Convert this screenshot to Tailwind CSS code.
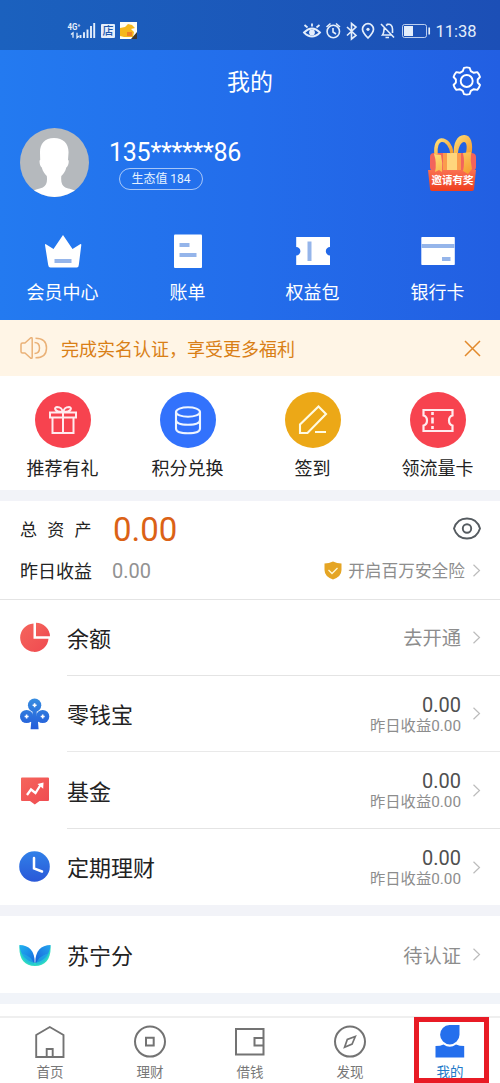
<!DOCTYPE html>
<html lang="zh-CN">
<head>
<meta charset="utf-8">
<title>我的</title>
<script src="https://cdn.jsdelivr.net/npm/@tailwindcss/browser@4"></script>
</head>
<body class="w-[500px] h-[1083px] overflow-hidden bg-white font-['Roboto','Noto_Sans_CJK_SC',sans-serif] text-[#222]">
<div class="flex flex-col w-[500px] h-[1083px] whitespace-nowrap">

  <!-- Status bar -->
  <div class="h-[50px] shrink-0 bg-linear-to-r from-[#1b61be] to-[#1c4fb6] text-[#e8f1ff]">
    <svg class="block" width="500" height="50" viewBox="0 0 500 50" fill="none" stroke="#e4eefb" stroke-width="1.4">
      <text x="67.500" y="29.500" font-size="8.500" font-weight="700" fill="#e4eefb" stroke="none" textLength="13" lengthAdjust="spacingAndGlyphs">4G⁺</text>
      <path d="M71 34.500l2-1.700v5M77 32.800v5l2-1.700" stroke-width="1.300"/>
      <path d="M80.500 35v3M84 32.300V38M87.500 29.500V38M91 26V38M94.200 23V38" stroke-width="1.900"/>
      <rect x="101" y="24" width="14" height="14" rx="1" fill="#e4eefb" stroke="none"/>
      <text x="102.500" y="35" font-size="11" font-weight="500" fill="#1d57ad" stroke="none">店</text>
      <rect x="120" y="22" width="17" height="17" fill="#fdfdf5" stroke="none"/>
      <path d="M120 28l5-1 3-3 4 1 3 3-4 1 3 3-1 5h-9l-4-1z" fill="#f5b81c" stroke="none"/>
      <path d="M127 32h5v4h-5z" fill="#ee8125" stroke="none"/>
      <path d="M137 32v7h-6z" fill="#3d3932" stroke="none"/>
      <path d="M304 32.500q8-8 16 0q-8 8-16 0zM312 26.500v-3M307.500 27.500l-3-2.500M316.500 27.500l3-2.500" stroke-width="1.800"/>
      <circle cx="312" cy="32.500" r="2.900" fill="#e4eefb" stroke="none"/>
      <circle cx="333.300" cy="31.500" r="6.200" stroke-width="1.600"/><path d="M333 28v4l3 2M326.500 27l4-3.500M340 27l-4-3.500" stroke-width="1.600"/>
      <path d="M347 27l9 8.500-4.500 3.500V23.500l4.500 3.500-9 8.500" stroke-width="1.600"/>
      <path d="M368 38c-3.500-3.500-5.500-5.500-5.500-8.800a5.500 5.500 0 0 1 11 0c0 3.300-2 5.300-5.500 8.800z" stroke-width="1.700"/><circle cx="368" cy="29.300" r="1.600" fill="#e4eefb" stroke="none"/>
      <path d="M381 24l13 13.500M384.500 27.500c-1 2 0 5-2 7.500h9M386 25.500c4-3 6.500 0 6.500 3.500v4M387.500 23.500v1M385.500 37.500h3.500" stroke-width="1.600"/>
      <rect x="402.500" y="24.500" width="24" height="13" rx="2" stroke-width="1" stroke-opacity=".8"/>
      <rect x="404" y="26" width="9" height="10" fill="#e4eefb" stroke="none"/><path d="M429.200 27.500v7" stroke-width="1.700"/>
      <text x="435.500" y="37" font-size="16.500" fill="#e4eefb" stroke="none">11:38</text>
    </svg>
  </div>

  <!-- Profile header -->
  <header class="h-[270px] shrink-0 bg-linear-to-r from-[#237af0] via-[#236deb] via-50% to-[#225fe2] text-white flex flex-col">
    <div class="h-[62px] grid grid-cols-[1fr_auto_1fr] items-center px-[19px]">
      <span></span>
      <h1 class="text-[23px] leading-[30px] pt-[4px]">我的</h1>
      <svg class="justify-self-end" width="29" height="30" viewBox="452 66 29 30" fill="none" stroke="#fff" stroke-width="1.900" stroke-linejoin="round">
        <path d="M464 67.800q2.800-.8 5.600 0l1.200 3.300 3 1.700 3.500-.7q2 2.200 2.700 4.900l-2.300 2.500v3l2.300 2.500q-.8 2.800-2.700 4.900l-3.500-.7-3 1.700-1.200 3.300q-2.800.8-5.600 0l-1.200-3.300-3-1.700-3.500.7q-2-2.200-2.700-4.900l2.300-2.500v-3l-2.300-2.500q.8-2.800 2.700-4.900l3.500.7 3-1.700z"/>
        <circle cx="466.700" cy="81" r="6"/>
      </svg>
    </div>
    <div class="h-[108px] flex items-start pl-5 pr-[20px] pt-[15px]">
      <svg class="mt-px" width="69" height="70" viewBox="0 0 69 70">
        <defs><clipPath id="avatar"><circle cx="34.500" cy="34.500" r="34.500"/></clipPath></defs>
        <g clip-path="url(#avatar)"><path d="M0 0h69v70H0z" fill="#b5b9bd"/>
        <path d="M34 10c-9.500 0-14.300 6-14 15l.2 7c-1.300 0-.6 6 1.600 7.500 1 4 2.700 6 5 8.500.7 6-.3 9.500-4 11.500-4 1.500-8 1.800-11 4.500v7h45v-7c-3-2.700-8-3-11.500-4.500-3.500-2-4.500-5.500-4-11.500 2.500-2.500 4-4.500 5-8.500 2.300-1.500 3.200-7.500 1.700-7.500l.5-7c.5-9-5-15-14.500-15z" fill="#fff"/></g>
      </svg>
      <div class="ml-[20px] mt-[11px] flex-1">
        <div class="text-[25px] leading-[30px] tracking-[-0.25px]">135******86</div>
        <div class="ml-[10px] w-[84px] h-[22px] rounded-full border border-white/60 text-[12px] leading-[21px] text-center text-[#e6f2ff]">生态值 184</div>
      </div>
      <svg class="mt-[7px]" width="52" height="58" viewBox="428 134 52 58">
        <defs>
          <linearGradient id="ribbon" x1="0" y1="0" x2="1" y2="1"><stop stop-color="#ffdf7a"/><stop offset="1" stop-color="#f59b2c"/></linearGradient>
          <linearGradient id="box" x1="0" y1="0" x2="0" y2="1"><stop stop-color="#fa7050"/><stop offset="1" stop-color="#ee3e1e"/></linearGradient>
        </defs>
        <path d="M430 157q0-4 4-4h37q5 0 5 4v10q0 4-5 4h-37q-4 0-4-4z" fill="#f2645c"/>
        <path d="M443 153h18v17h-18z" fill="#fb9c4c"/><path d="M447 153h10v17h-10z" fill="#ffd67d"/>
        <path d="M454 153c-1-9 3-18 10-18 7-.5 9.500 9 7.500 19l-5.500-1c1.500-7 .5-11-2-11-3 0-5.500 5-6 11z" fill="url(#ribbon)"/>
        <path d="M452 153c-1-7-5-13-10.500-13-5 1-6 7-5.500 14" fill="none" stroke="url(#ribbon)" stroke-width="3.500"/>
        <path d="M428 170h48l-2 19q0 2-3 2h-38q-3 0-3-2z" fill="url(#box)"/>
        <path d="M434 154l7 1q2 8 1 17l-3-2-4 2q2-9-1-18zM463 153l8-1q-1 9 1 17l-4 5-5-3q2-9 0-18z" fill="url(#ribbon)"/>
        <text x="431.500" y="184" font-size="10.500" font-weight="700" fill="#fff">邀请有奖</text>
      </svg>
    </div>
    <div class="grid grid-cols-4 text-[18px] leading-[28px] text-center">
      <div><svg class="mx-auto h-[59px]" width="60" viewBox="32.500 220 60 59"><path d="M45 244l8 5 9.500-14 9.500 14 8-5q1 0 .8 1l-2.500 20q-.2 2.500-2 2.500H50q-2 0-2.300-2.500L44.500 245q0-1 .5-1z" fill="#fff"/><path d="M54 259h17v4H54z" fill="#95b5ea"/></svg>会员中心</div>
      <div><svg class="mx-auto h-[59px]" width="60" viewBox="157.500 220 60 59"><rect x="173.500" y="234.500" width="28" height="33.500" rx="1" fill="#fff"/><path d="M179 243h10v4h-10zM179 253h17v4h-17z" fill="#95b5ea"/></svg>账单</div>
      <div><svg class="mx-auto h-[59px]" width="60" viewBox="282.500 220 60 59"><path d="M296 237h33q.5 0 .5.500V247a4.200 4.200 0 0 0 0 8.400v9.600h-33.800v-9.600a4.200 4.200 0 0 0 0-8.400V237z" fill="#fff"/><path d="M307 241.500h4V261h-4z" fill="#95b5ea"/></svg>权益包</div>
      <div><svg class="mx-auto h-[59px]" width="60" viewBox="407.500 220 60 59"><rect x="420.800" y="237" width="33.500" height="28" rx=".8" fill="#fff"/><path d="M421 244h33v4h-33zM441.500 257h8.500v4h-8.500z" fill="#95b5ea"/></svg>银行卡</div>
    </div>
  </header>

  <!-- Verification notice -->
  <div class="h-[56px] shrink-0 bg-[#fff5e6] text-[#d97f16] flex items-center pl-5 pr-[19px] text-[18px] pt-px">
    <svg class="-mt-[2px]" width="28" height="22" viewBox="0 0 28 22" fill="none" stroke="#eab177" stroke-width="1.500" stroke-linejoin="round"><path d="M1 7.500q0-1.500 1.500-1.500H5l5.500-5q1.700-1 1.700 1v18q0 2-1.700 1L5 16H2.500Q1 16 1 14.500zM14.500 5.500q5 0 5 5.500t-5 5.500M15.500 1.200q11 0 11 9.800t-11 9.800"/></svg>
    <span class="ml-[13px] flex-1 pt-px">完成实名认证，享受更多福利</span>
    <svg class="-mt-px" width="17" height="17" viewBox="0 0 17 17" stroke="#e28a2c" stroke-width="1.500"><path d="M1 1l15 15M16 1L1 16"/></svg>
  </div>

  <!-- Shortcuts -->
  <div class="h-[114px] shrink-0 grid grid-cols-4 pt-[16px] text-[18px] leading-[28px] text-center">
    <div><svg class="mx-auto mb-[7px]" width="56" height="56" viewBox="0 0 56 56" fill="none" stroke="#ffebee" stroke-width="2"><circle cx="28" cy="28" r="28" fill="#f7434f" stroke="none"/><path d="M15 20.500h26v5H15zM17.500 25.500h21V41h-21zM28 20.500V41M27.500 20c-8 0-9-4.500-5.500-5 3.500 0 5.500 2.500 5.500 5zM28.500 20c8 0 9-4.500 5.500-5-3.500 0-5.500 2.500-5.500 5z"/></svg>推荐有礼</div>
    <div><svg class="mx-auto mb-[7px]" width="56" height="56" viewBox="0 0 56 56" fill="none" stroke="#eef5ff" stroke-width="2.100"><circle cx="28" cy="28" r="28" fill="#3272fc" stroke="none"/><ellipse cx="28" cy="20" rx="12" ry="4.800"/><path d="M16 20v16.500c0 3 5 4.800 12 4.800s12-1.800 12-4.800V20M16 28c0 3 5 4.700 12 4.700S40 31 40 28"/></svg>积分兑换</div>
    <div><svg class="mx-auto mb-[7px]" width="56" height="56" viewBox="0 0 56 56" fill="none" stroke="#fffbe3" stroke-width="2.100"><circle cx="28" cy="28" r="28" fill="#eca817" stroke="none"/><path d="M15 41V32.500L33.500 14.500 41 22 22.500 41zM30 40h11"/></svg>签到</div>
    <div><svg class="mx-auto mb-[7px]" width="56" height="56" viewBox="0 0 56 56" fill="none" stroke="#ffebee" stroke-width="2.200"><circle cx="28" cy="28" r="28" fill="#f7434f" stroke="none"/><path d="M13.500 18h29v5.500q-3.500 1-3.500 5t3.500 5V39h-29v-5.500q3.500-1 3.500-5t-3.500-5z"/><path d="M22.500 20v3M22.500 25.500v6M22.500 34v3" stroke-width="2.600"/></svg>领流量卡</div>
  </div>
  <div class="h-[11px] shrink-0 bg-[#f2f3f8]"></div>

  <!-- Total assets -->
  <section class="h-[99px] shrink-0 border-b border-[#e4e4e4] pl-5 pr-[19px]">
    <div class="h-[54px] flex items-center pt-[2px]">
      <span class="text-[17px] tracking-[10.300px] pt-[3px]">总资产</span>
      <span class="ml-[11px] text-[33px] leading-[40px] text-[#db6216] flex-1 pt-[2px]">0.00</span>
      <svg width="28" height="24" viewBox="0 0 28 24" fill="none" stroke="#555b60" stroke-width="1.900"><path d="M1 11.500C3 5 8 1.500 14 1.500S25 5 27 11.500C25 18 20 21.500 14 21.500S3 18 1 11.500z"/><circle cx="14" cy="11.500" r="4.200"/></svg>
    </div>
    <div class="h-[32px] flex items-center">
      <span class="text-[18px]">昨日收益</span>
      <span class="ml-5 text-[20px] text-[#929292] flex-1">0.00</span>
      <svg class="-mt-[2px]" width="18" height="19" viewBox="0 0 18 19"><path d="M9 .5q4 2 8.500 2V9q0 6.500-8.500 9.500Q.500 15.500.500 9V2.500q4.500 0 8.500-2z" fill="#e5a524"/><path d="M4.500 9l3.500 3.500 5.500-5.500" fill="none" stroke="#fff8d8" stroke-width="1.300"/></svg>
      <span class="ml-[6px] text-[16.700px] text-[#8d8d8d] pt-[2px]">开启百万安全险</span>
      <svg class="ml-[7px] -mt-[2px]" width="9" height="13" viewBox="0 0 9 13" fill="none" stroke="#bcbcbc" stroke-width="1.200"><path d="M1.500.7L7.500 6.500l-6 5.800"/></svg>
    </div>
  </section>

  <!-- Accounts -->
  <section class="shrink-0 text-[22px]">
    <div class="h-[76px] flex pl-5">
      <svg class="mt-[22px]" width="30" height="31" viewBox="20 622 30 31"><defs><linearGradient id="red" x1="0" y1="0" x2="1" y2="1"><stop stop-color="#f5655c"/><stop offset="1" stop-color="#ef4a50"/></linearGradient></defs><path d="M33.500 623.500v15.300h15a14.200 14.200 0 1 1-15-15.300z" fill="url(#red)"/><path d="M36 622.700a14 14 0 0 1 14 13.600H36z" fill="url(#red)"/></svg>
      <div class="ml-[17px] flex-1 border-b border-[#e4e4e4] flex items-center pr-[19px]"><span class="flex-1 pt-[4px]">余额</span><span class="text-[19.300px] text-[#8d8d8d] pt-[4px]">去开通</span><svg class="ml-[11px]" width="9" height="13" viewBox="0 0 9 13" fill="none" stroke="#bcbcbc" stroke-width="1.200"><path d="M1.500.7L7.500 6.500l-6 5.800"/></svg></div>
    </div>
    <div class="h-[76px] flex pl-5">
      <svg class="mt-[22px]" width="30" height="32" viewBox="20 698 30 32" fill="url(#blue)"><defs><linearGradient id="blue" gradientUnits="userSpaceOnUse" x1="0" y1="698" x2="0" y2="729"><stop stop-color="#378de0"/><stop offset="1" stop-color="#245cda"/></linearGradient></defs><circle cx="34.600" cy="705.300" r="6.700"/><circle cx="26.600" cy="716.500" r="6.600"/><circle cx="42.700" cy="716.500" r="6.600"/><path d="M32.500 710h4.200v6l4 3-2.700 3 .6 7.200h-8l.6-7.200-2.700-3 4-3z"/><path d="M34.600 703.300v4M32.600 705.300h4M26.600 714.500v4M24.600 716.500h4M42.700 714.500v4M40.700 716.500h4" stroke="#fff" stroke-width="1.600"/></svg>
      <div class="ml-[17px] flex-1 border-b border-[#e9e9e9] flex items-center pr-[19px]"><span class="flex-1 pt-[4px]">零钱宝</span><div class="text-right pt-[3px]"><div class="text-[20px] leading-[21px] text-[#505050]">0.00</div><div class="text-[15.300px] leading-[20px] text-[#8d8d8d]">昨日收益0.00</div></div><svg class="ml-[11px]" width="9" height="13" viewBox="0 0 9 13" fill="none" stroke="#bcbcbc" stroke-width="1.200"><path d="M1.500.7L7.500 6.500l-6 5.800"/></svg></div>
    </div>
    <div class="h-[77px] flex pl-5">
      <svg class="mt-[24px]" width="30" height="30" viewBox="20 776 30 30"><path d="M22 777.500h26q1 0 1 1V800q0 1-1 1h-8.500l-4.700 3.500L30 801h-8q-1 0-1-1v-21.500q0-1 1-1z" fill="url(#red)"/><path d="M27 795l4-5.500 4.500 3.500 5-8" fill="none" stroke="#fff" stroke-width="2.300"/><path d="M37.500 784l6-1.500-.3 6.200z" fill="#fff"/></svg>
      <div class="ml-[17px] flex-1 border-b border-[#e4e4e4] flex items-center pr-[19px]"><span class="flex-1 pt-[4px]">基金</span><div class="text-right pt-[2px]"><div class="text-[20px] leading-[21px] text-[#505050]">0.00</div><div class="text-[15.300px] leading-[20px] text-[#8d8d8d]">昨日收益0.00</div></div><svg class="ml-[11px]" width="9" height="13" viewBox="0 0 9 13" fill="none" stroke="#bcbcbc" stroke-width="1.200"><path d="M1.500.7L7.500 6.500l-6 5.800"/></svg></div>
    </div>
    <div class="h-[76px] flex pl-5">
      <svg class="mt-[22px] -ml-px" width="31" height="31" viewBox="0 0 31 31"><defs><linearGradient id="clock" x1="0" y1="0" x2="0" y2="1"><stop stop-color="#3080e8"/><stop offset="1" stop-color="#2a58d8"/></linearGradient></defs><circle cx="15.500" cy="15.500" r="15.300" fill="url(#clock)"/><path d="M15 7v10.500l8 3" fill="none" stroke="#fff" stroke-width="2.500" stroke-linecap="round"/></svg>
      <div class="ml-[17px] flex-1 flex items-center pr-[19px]"><span class="flex-1 pt-[3px]">定期理财</span><div class="text-right pt-[2px]"><div class="text-[20px] leading-[21px] text-[#505050]">0.00</div><div class="text-[15.300px] leading-[20px] text-[#8d8d8d]">昨日收益0.00</div></div><svg class="ml-[11px]" width="9" height="13" viewBox="0 0 9 13" fill="none" stroke="#bcbcbc" stroke-width="1.200"><path d="M1.500.7L7.500 6.500l-6 5.800"/></svg></div>
    </div>
    <div class="h-[11px] bg-[#f2f3f8]"></div>
    <div class="h-[77px] flex pl-5">
      <svg class="mt-[28px] -ml-[1px]" width="32" height="23" viewBox="0 0 32 23"><defs><linearGradient id="leafL" x1="0" y1="0" x2="1" y2="1"><stop stop-color="#20b4f0"/><stop offset="1" stop-color="#1768de"/></linearGradient><linearGradient id="leafR" x1="1" y1="0" x2="0" y2="1"><stop stop-color="#24a6ee"/><stop offset="1" stop-color="#1760da"/></linearGradient></defs><path d="M.5 1C-.5 14 5 22 16 22S32.500 14 31.500 1L16 19z" fill="#2fdcc0"/><path d="M.5 1C10 1 16 7 15.700 19 7 17 1 11 .5 1z" fill="url(#leafL)"/><path d="M31.500 1C22 1 16 7 16.300 19 25 17 31 11 31.500 1z" fill="url(#leafR)"/><path d="M2 9q11 3 13.500 12Q5 20 2 9zM30 9q-11 3-13.500 12Q27 20 30 9z" fill="#1fb4e4" fill-opacity=".6"/></svg>
      <div class="ml-[16px] flex-1 flex items-center pr-[19px]"><span class="flex-1 pt-[3px]">苏宁分</span><span class="text-[19.300px] text-[#8d8d8d] pt-[5px]">待认证</span><svg class="ml-[11px]" width="9" height="13" viewBox="0 0 9 13" fill="none" stroke="#bcbcbc" stroke-width="1.200"><path d="M1.500.7L7.500 6.500l-6 5.800"/></svg></div>
    </div>
    <div class="h-[11px] bg-[#f1f4f9]"></div>
    <div class="h-[12px]"></div>
  </section>

  <!-- Tab bar -->
  <nav class="relative h-[67px] shrink-0 border-t-2 border-[#efefef] grid grid-cols-5 text-[13.500px] leading-[20px] text-center text-[#777]">
    <div><svg class="mx-auto mt-[7px] mb-[4px]" width="34" height="33" viewBox="33 1025 34 33" fill="none" stroke="#737373" stroke-width="1.900"><path d="M36.200 1057v-22l13.600-8 13.700 8v22zM46.700 1057v-8h6v8"/></svg>首页</div>
    <div><svg class="mx-auto mt-[7px] mb-[4px]" width="34" height="33" viewBox="133 1025 34 33" fill="none" stroke="#737373" stroke-width="2"><circle cx="150" cy="1041.600" r="15"/><path d="M146 1037.800h7.700v7.700H146z"/></svg>理财</div>
    <div><svg class="mx-auto mt-[7px] mb-[4px]" width="34" height="33" viewBox="233 1025 34 33" fill="none" stroke="#737373" stroke-width="2"><path d="M236 1029h27.500v25.500H236zM263.500 1038h-9v7.500h9"/></svg>借钱</div>
    <div><svg class="mx-auto mt-[7px] mb-[4px]" width="34" height="33" viewBox="333 1025 34 33" fill="none" stroke="#737373" stroke-width="2"><circle cx="350" cy="1041.600" r="15"/><path d="M355.300 1036.500l-3.200 7.500-7.500 3.200 2.700-7.700z" stroke-width="1.700"/></svg>发现</div>
    <div class="text-[#237ac9]"><svg class="mx-auto mt-[7px] mb-[4px]" width="34" height="33" viewBox="433 1025 34 33" fill="#246fed"><path d="M449.500 1025h10v9.800a9.700 9.700 0 1 1-10-9.800zM435.500 1046q5 0 8-1.500 6.300 4.500 12.500 0 3.500 1.500 8.200 1.500v11.500h-28.700z"/></svg>我的</div>
    <div class="absolute left-[414px] -top-[1px] w-[75px] h-[66px] border-[5px] border-[#e81b25]"></div>
  </nav>
</div>
</body>
</html>
